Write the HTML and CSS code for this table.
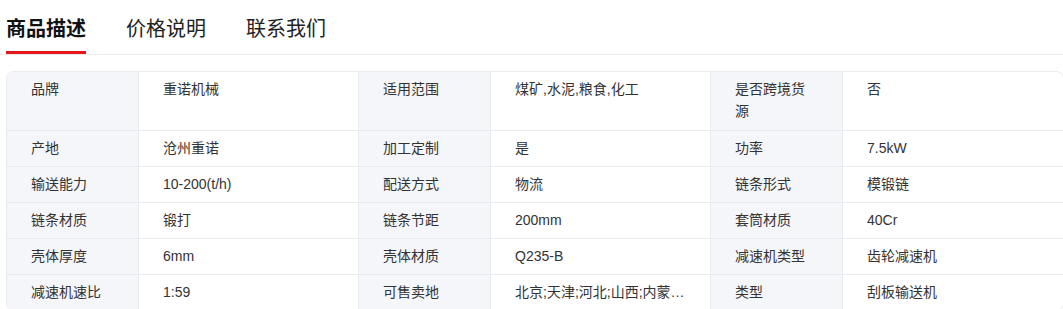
FILE: index.html
```html
<!DOCTYPE html>
<html lang="zh-CN">
<head>
<meta charset="utf-8">
<title>商品描述</title>
<link rel="stylesheet" href="styles.css">
</head>
<body>
<div class="tabs">
  <div class="tab active">商品描述</div>
  <div class="tab">价格说明</div>
  <div class="tab">联系我们</div>
</div>
<div class="wrap">
<table class="specs">
  <colgroup>
    <col class="c-label"><col class="c-value"><col class="c-label"><col class="c-value"><col class="c-label"><col class="c-value">
  </colgroup>
  <tr class="first">
    <th>品牌</th><td>重诺机械</td>
    <th>适用范围</th><td>煤矿,水泥,粮食,化工</td>
    <th>是否跨境货源</th><td>否</td>
  </tr>
  <tr>
    <th>产地</th><td>沧州重诺</td>
    <th>加工定制</th><td>是</td>
    <th>功率</th><td>7.5kW</td>
  </tr>
  <tr>
    <th>输送能力</th><td>10-200(t/h)</td>
    <th>配送方式</th><td>物流</td>
    <th>链条形式</th><td>模锻链</td>
  </tr>
  <tr>
    <th>链条材质</th><td>锻打</td>
    <th>链条节距</th><td>200mm</td>
    <th>套筒材质</th><td>40Cr</td>
  </tr>
  <tr>
    <th>壳体厚度</th><td>6mm</td>
    <th>壳体材质</th><td>Q235-B</td>
    <th>减速机类型</th><td>齿轮减速机</td>
  </tr>
  <tr>
    <th>减速机速比</th><td>1:59</td>
    <th>可售卖地</th><td class="nowrap">北京;天津;河北;山西;内蒙…</td>
    <th>类型</th><td>刮板输送机</td>
  </tr>
</table>
</div>
</body>
</html>
```
FILE: styles.css
```css
html, body {
  margin: 0;
  padding: 0;
  background: #ffffff;
}
body {
  font-family: "Liberation Sans", "Noto Sans CJK SC", sans-serif;
  color: #333333;
  width: 1063px;
  overflow: hidden;
}
.tabs {
  display: flex;
  gap: 40px;
  padding: 15px 0 0 6px;
  border-bottom: 1px solid #ebebeb;
}
.tab {
  font-size: 20px;
  line-height: 28px;
  padding-bottom: 8px;
  border-bottom: 3px solid transparent;
  color: #222222;
}
.tab.active {
  font-weight: 700;
  color: #111111;
  border-bottom-color: #e4161e;
}
.wrap {
  padding: 16px 0 0 6px;
}
.specs {
  width: 1056px;
  table-layout: fixed;
  border-collapse: separate;
  border-spacing: 0;
  border: 1px solid #e9eaef;
  border-radius: 8px;
  overflow: hidden;
  font-size: 14px;
  line-height: 22px;
}
.c-label { width: 132px; }
.c-value { width: 220px; }
.specs th, .specs td {
  text-align: left;
  vertical-align: top;
  padding: 6px 25px 7px 24px;
  border-bottom: 1px solid #e9eaef;
  border-right: 1px solid #e9eaef;
  color: #333333;
  font-weight: 400;
}
.specs tr.first > * {
  padding-bottom: 8px;
}
.specs th {
  background: #f5f6fa;
}
.specs td {
  background: #ffffff;
}
.specs tr > :last-child {
  border-right: none;
}
.specs tr:last-child > * {
  border-bottom: none;
}
.specs td.nowrap {
  white-space: nowrap;
  padding-right: 20px;
}
```
